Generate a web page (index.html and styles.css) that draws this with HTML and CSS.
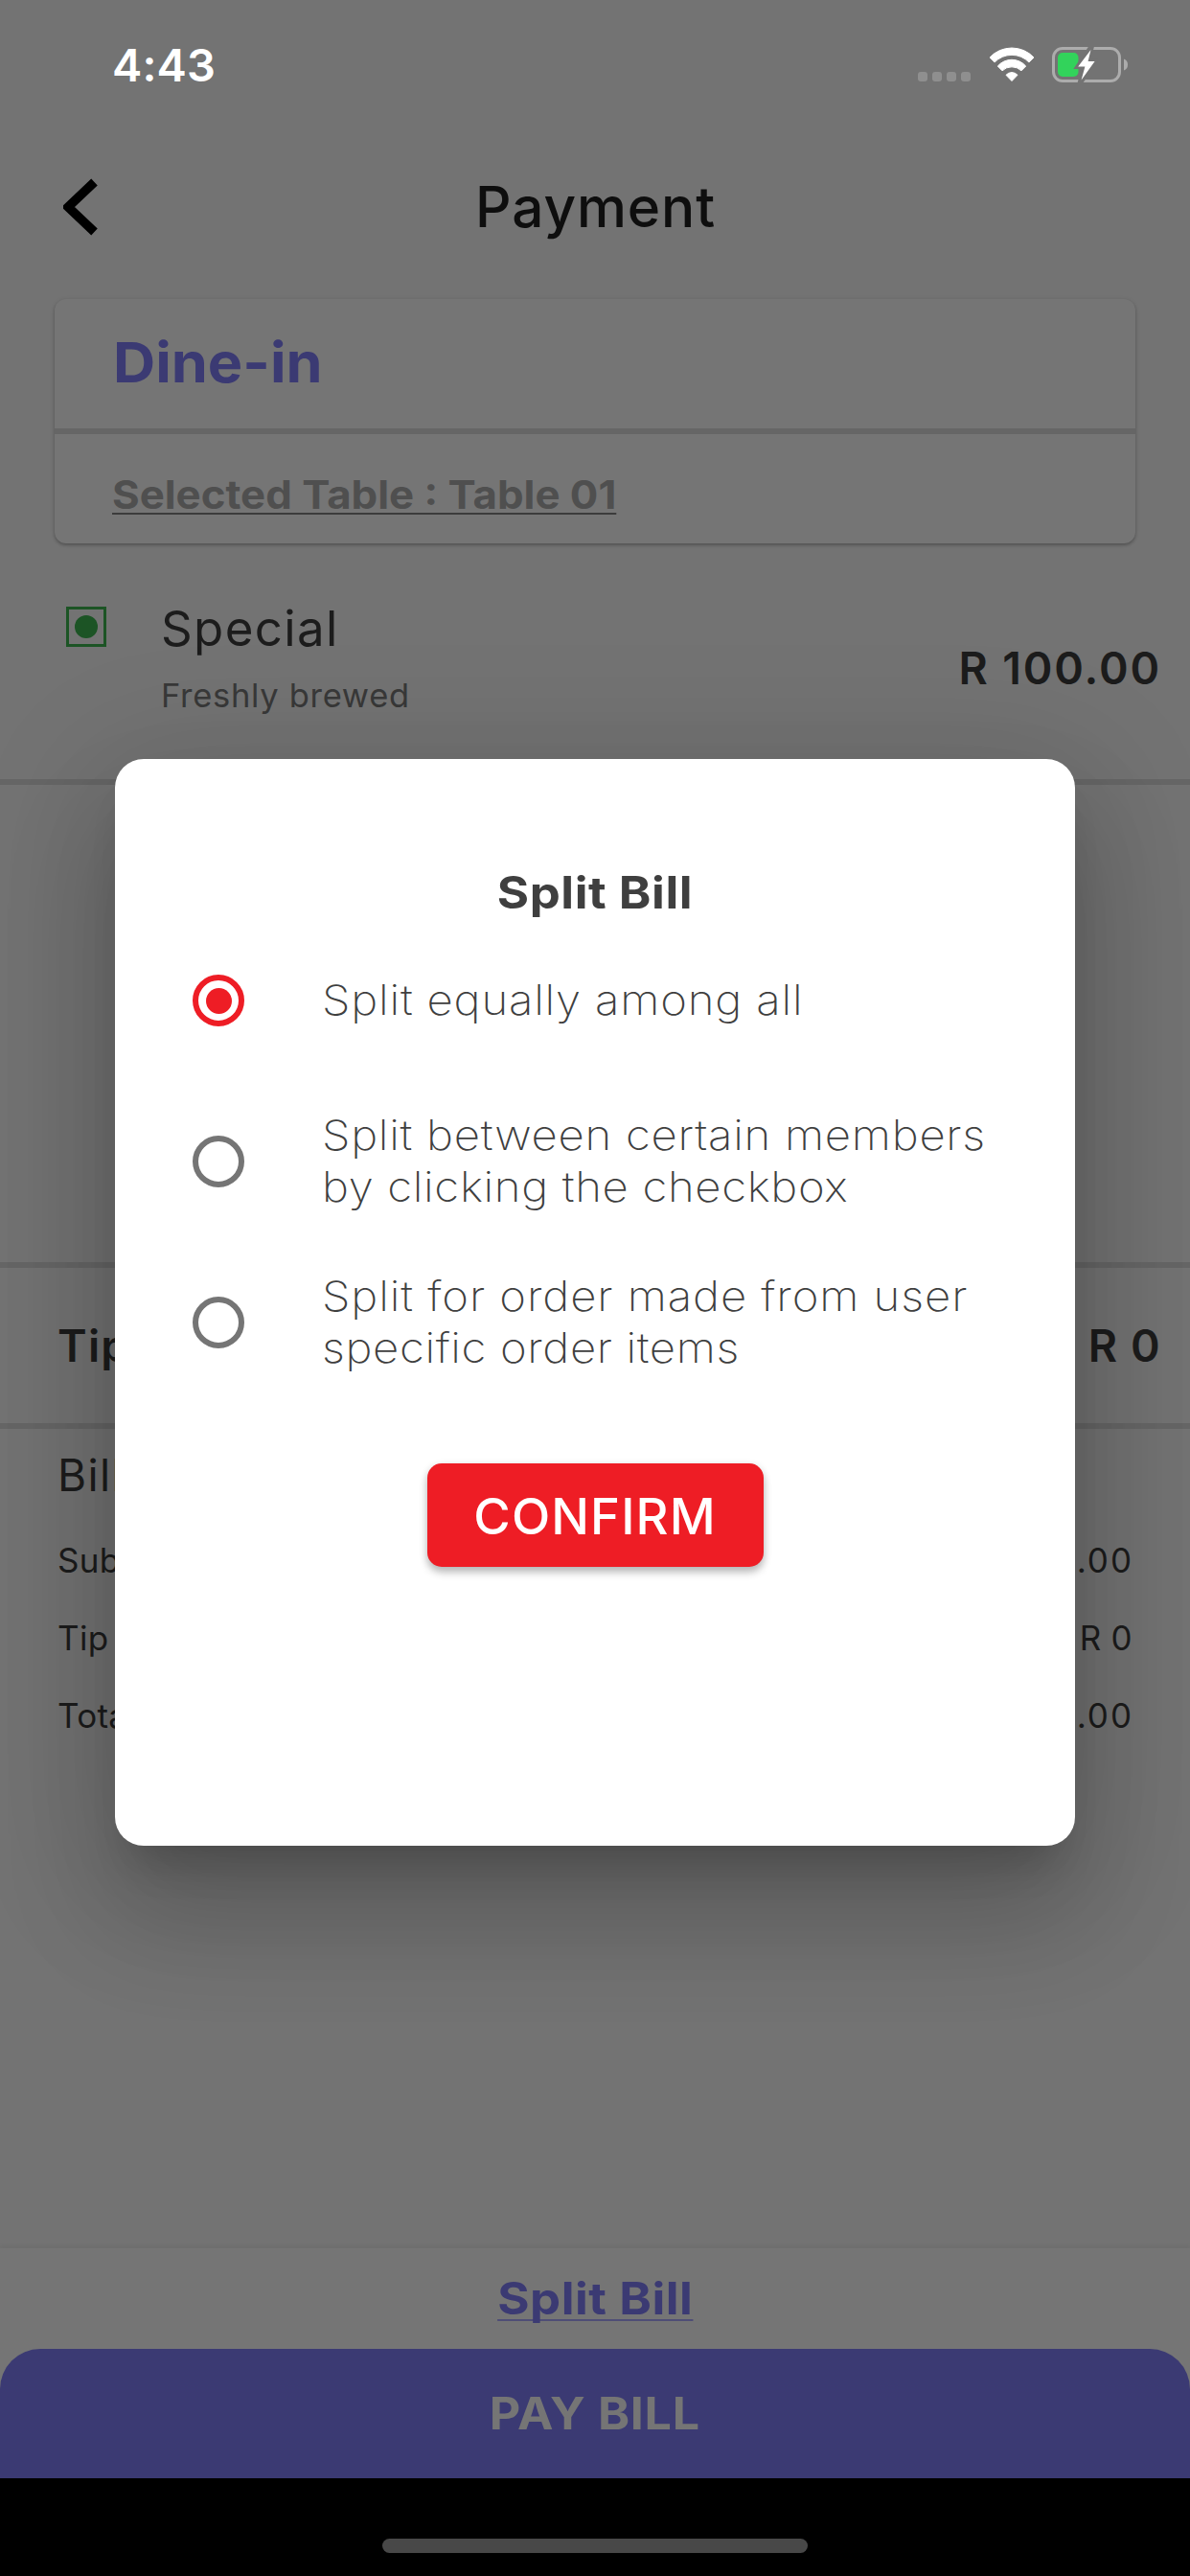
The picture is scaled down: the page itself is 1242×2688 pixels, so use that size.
FILE: index.html
```html
<!DOCTYPE html>
<html lang="en">
<head>
<meta charset="utf-8">
<title>Payment</title>
<link rel="stylesheet" href="styles.css">
</head>
<body>
<div class="screen">
  <div class="status-bar">
    <span class="clock">4:43</span>
    <div class="status-icons">
      <div class="signal"><i></i><i></i><i></i><i></i></div>
      <svg class="wifi" viewBox="0 0 48 36" width="48" height="36">
        <path d="M1 11A31.5 31.5 0 0 1 47 11L42 16A25 25 0 0 0 6 16Z"/>
        <path d="M9.3 20A19.5 19.5 0 0 1 38.7 20L34 24.8A14.5 14.5 0 0 0 14 24.8Z"/>
        <path d="M18 29.3A8 8 0 0 1 30 29.3L24 35.5Z"/>
      </svg>
      <svg class="battery" viewBox="0 0 79 37" width="79" height="37">
        <rect class="battery-case" x="1.5" y="1.5" width="69" height="34" rx="9.5"/>
        <path class="battery-tip" d="M75 12.5Q79 14 79 18.5T75 24.5Z"/>
        <rect class="battery-level" x="6" y="6" width="21.5" height="25" rx="5"/>
        <path class="bolt-gap" d="M41.5 -1L27 20.5H34L29 38L44.5 15H37.5Z"/>
        <path class="bolt" d="M40.5 3L27.2 20.5H34.4L30.6 34.5L44.6 15H37.6Z"/>
      </svg>
    </div>
  </div>

  <header class="header">
    <svg class="back" viewBox="0 0 36 60" width="36" height="60"><path d="M32.5 4L5 30L32.5 56"/></svg>
    <h1 class="title">Payment</h1>
  </header>

  <section class="order-card">
    <div class="order-type"><span class="wide">Dine-in</span></div>
    <div class="order-table"><span class="wide">Selected Table : Table 01</span></div>
  </section>

  <section class="item">
    <div class="veg-mark"><i></i></div>
    <div class="item-text">
      <div class="item-name">Special</div>
      <div class="item-desc">Freshly brewed</div>
    </div>
    <div class="item-price">R 100.00</div>
  </section>
  <div class="spacer"></div>
  <section class="tip"><span>Tip</span><span>R 0</span></section>

  <section class="bill">
    <h2 class="bill-title">Bill Details</h2>
    <div class="bill-row"><span>Sub Total</span><span class="amount">R 100.00</span></div>
    <div class="bill-row"><span>Tip</span><span>R 0</span></div>
    <div class="bill-row"><span>Total</span><span class="amount">R 100.00</span></div>
  </section>

  <footer class="footer">
    <div class="split-link"><a>Split Bill</a></div>
    <div class="pay"><span>PAY BILL</span></div>
    <div class="home-area"><i></i></div>
  </footer>

  <div class="dialog">
    <h2 class="dialog-title">Split Bill</h2>
    <div class="option">
      <i class="radio radio-on"></i>
      <p class="option-text">Split equally among all</p>
    </div>
    <div class="option">
      <i class="radio"></i>
      <p class="option-text option-members">Split between certain members<br><span>by clicking the checkbox</span></p>
    </div>
    <div class="option">
      <i class="radio"></i>
      <p class="option-text option-items">Split for order made from user<br><span>specific order items</span></p>
    </div>
    <div class="confirm">CONFIRM</div>
  </div>
</div>
</body>
</html>
```
FILE: styles.css
```css
* { box-sizing: border-box; margin: 0; padding: 0; }

body { background: #737373; }

.screen {
  position: relative;
  width: 1242px;
  height: 2688px;
  display: flex;
  flex-direction: column;
  overflow: hidden;
  background: #737373;
  color: #1c1c1c;
  font-family: Inter, "Liberation Sans", sans-serif;
  white-space: nowrap;
}

/* Status bar */
.status-bar {
  height: 136px;
  padding: 0 65px 0 117px;
  display: flex;
  justify-content: space-between;
  align-items: center;
}
.clock { color: #fff; font-size: 47px; font-weight: 600; letter-spacing: 0.14px; line-height: 56px; padding-bottom: 1px; }
.status-icons { display: flex; align-items: flex-end; padding-bottom: 1px; }
.signal { display: flex; gap: 5px; margin-right: 19px; padding-bottom: 1px; }
.signal i { width: 10px; height: 10px; border-radius: 3px; background: #8f8f8f; }
.wifi { margin: 0 18px 1px 0; fill: #fff; stroke: #fff; stroke-width: 1; stroke-linejoin: round; }
.battery-case { fill: none; stroke: #acacac; stroke-width: 3; }
.battery-tip { fill: #acacac; }
.battery-level { fill: #32d35b; }
.bolt-gap { fill: #737373; stroke: #737373; stroke-width: 5; }
.bolt { fill: #fff; }

/* Header */
.header {
  height: 160px;
  padding: 0 66px;
  display: grid;
  grid-template-columns: 1fr auto 1fr;
  align-items: center;
}
.back { fill: none; stroke: #000; stroke-width: 9.5; }
.title {
  color: #0e0e0e;
  font-size: 58.5px;
  font-weight: 450;
  line-height: 70px;
  letter-spacing: 0.9px;
  padding-left: 1px;
  padding-bottom: 1px;
}

/* Order card */
.order-card {
  margin: 16px 57px 0;
  height: 255px;
  border-radius: 12px;
  background: #757575;
  box-shadow: 0 2px 3px rgba(0, 0, 0, 0.2), 0 1px 5px rgba(0, 0, 0, 0.12);
}
.wide { display: inline-block; transform-origin: 0 50%; }
.order-type {
  height: 141px;
  padding: 0 61px 3px;
  border-bottom: 6px solid #666;
  line-height: 132px;
  color: #3b3a73;
  font-size: 58px;
  font-weight: 700;
}
.order-type .wide { transform: scaleX(1.055); }
.order-table {
  padding: 13px 60px 0;
  line-height: 100px;
  color: #4f4f4f;
  font-size: 41px;
  font-weight: 700;
}
.order-table .wide {
  transform: scaleX(1.068);
  text-decoration: underline 2px #3c3c3c;
  text-decoration-skip-ink: none;
  text-underline-offset: 4px;
}

/* Ordered item */
.item {
  height: 252px;
  padding: 56px 30px 0 69px;
  display: flex;
  align-items: flex-start;
  border-bottom: 6px solid #666;
}
.veg-mark {
  width: 42px;
  height: 42px;
  margin-top: 10px;
  display: grid;
  place-items: center;
  border: 3px solid #1c5425;
}
.veg-mark i { width: 24px; height: 24px; border-radius: 50%; background: #1c5425; }
.item-text { flex: 1; padding-left: 57px; }
.item-name { font-size: 51px; line-height: 66px; letter-spacing: 1.37px; }
.item-desc { margin-top: 12px; color: #383838; font-size: 34.5px; line-height: 50px; letter-spacing: 0.7px; }
.item-price { margin-top: 44px; font-size: 46.5px; font-weight: 600; line-height: 60px; letter-spacing: 1.85px; }

.spacer { height: 498px; }

.tip {
  height: 174px;
  padding: 0 30px 0 60px;
  display: flex;
  justify-content: space-between;
  align-items: center;
  border-top: 6px solid #666;
  border-bottom: 6px solid #666;
  font-size: 46.5px;
  font-weight: 600;
  letter-spacing: 1.2px;
}

/* Bill summary */
.bill { padding: 0 60px; }
.bill-title { font-size: 46px; font-weight: 400; line-height: 97px; letter-spacing: 1.4px; }
.bill-row {
  height: 81px;
  padding-bottom: 1px;
  display: flex;
  justify-content: space-between;
  align-items: center;
  font-size: 35px;
  letter-spacing: 0.3px;
}
.bill-row .amount { letter-spacing: 2px; margin-right: -1px; }

/* Footer */
.footer { margin-top: auto; background: #757575; box-shadow: 0 -1px 6px rgba(0, 0, 0, 0.08); }
.split-link {
  color: #3b3a73;
  font-size: 46.5px;
  font-weight: 700;
  line-height: 105px;
  letter-spacing: 0.5px;
  text-align: center;
}
.split-link a {
  display: inline-block;
  transform: scaleX(1.095);
  text-decoration: underline 2px #4f4e76;
  text-decoration-skip-ink: none;
  text-underline-offset: 5px;
}
.pay {
  height: 135px;
  border-radius: 42px 42px 0 0;
  background: #3b3a73;
  color: #757575;
  font-size: 46.5px;
  font-weight: 700;
  line-height: 135px;
  letter-spacing: 0.6px;
  text-align: center;
}
.pay span { display: inline-block; transform: scaleX(1.08); }
.home-area { height: 102px; padding-top: 63px; background: #000; }
.home-area i {
  display: block;
  width: 444px;
  height: 15px;
  margin: 0 auto;
  border-radius: 8px;
  background: #484848;
}

/* Split bill dialog */
.dialog {
  position: absolute;
  top: 792px;
  left: 120px;
  width: 1002px;
  height: 1134px;
  padding-top: 110px;
  border-radius: 30px;
  background: #fff;
  color: #3f3f3f;
  box-shadow:
    0 33px 45px -21px rgba(0, 0, 0, 0.2),
    0 72px 114px 9px rgba(0, 0, 0, 0.14),
    0 27px 138px 24px rgba(0, 0, 0, 0.12);
}
.dialog-title {
  font-size: 46.5px;
  font-weight: 700;
  line-height: 58px;
  letter-spacing: 0.5px;
  text-align: center;
  transform: scaleX(1.095);
}
.option {
  height: 168px;
  padding-left: 81px;
  display: flex;
  align-items: center;
  gap: 81px;
}
.radio {
  width: 54px;
  height: 54px;
  display: grid;
  place-items: center;
  border: 6px solid #757575;
  border-radius: 50%;
}
.radio-on { border-color: #ee1d25; }
.radio-on::after {
  content: "";
  width: 27px;
  height: 27px;
  border-radius: 50%;
  background: #ee1d25;
}
.option-text {
  padding-bottom: 2px;
  font-size: 43px;
  font-weight: 230;
  line-height: 54px;
  letter-spacing: 0.74px;
  transform: scaleX(1.1);
  transform-origin: 0 50%;
}
.option-members { letter-spacing: 0.66px; }
.option-members span { letter-spacing: 0.59px; }
.option-items { letter-spacing: 0.84px; }
.option-items span { letter-spacing: 0.56px; }
.confirm {
  width: 351px;
  height: 108px;
  margin: 63px auto 0;
  border-radius: 15px;
  background: #ee1d25;
  color: #fff;
  box-shadow: 0 6px 8px rgba(0, 0, 0, 0.22), 0 2px 8px rgba(0, 0, 0, 0.12);
  font-size: 52.5px;
  font-weight: 500;
  line-height: 110px;
  letter-spacing: 1.1px;
  text-align: center;
}
```
